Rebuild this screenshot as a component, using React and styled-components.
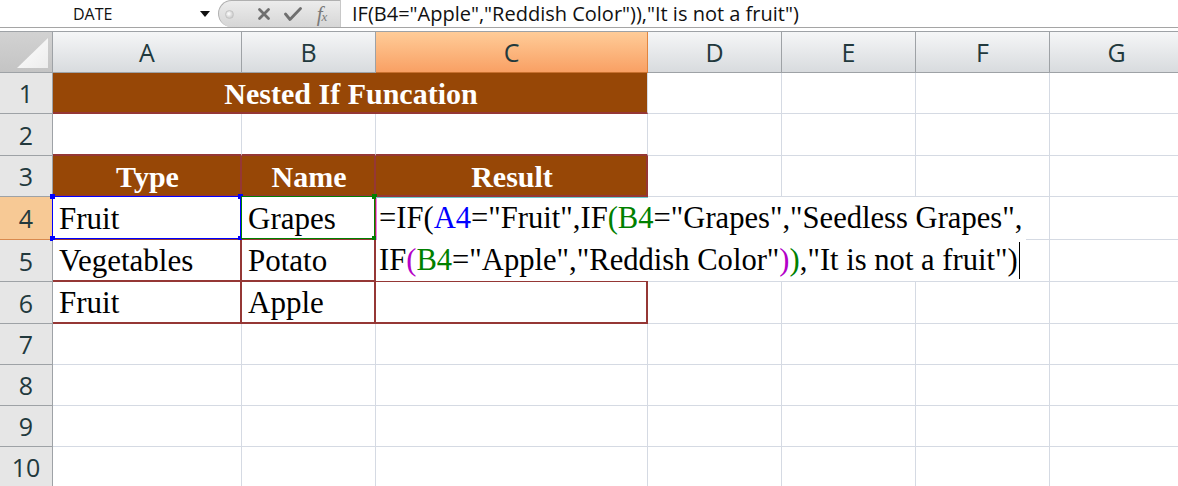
import React from "react";
import styled, { createGlobalStyle } from "styled-components";

const GlobalStyle = createGlobalStyle`
  html, body {
    margin: 0;
    padding: 0;
    background: #ffffff;
  }
  body {
    width: 1178px;
    height: 486px;
    overflow: hidden;
  }
`;

const MAROON = "#953735";
const BROWN = "#974706";
const GRID = "#d5dae3";
const HEAD_LINE = "#9ea2a6";

const columns = ["A", "B", "C", "D", "E", "F", "G"];
const widths = [189, 134, 272, 134, 134, 134, 134];
const heights = [41, 42, 41, 43, 42, 42, 41, 41, 41, 41];

const data = {
  A4: "Fruit",
  B4: "Grapes",
  A5: "Vegetables",
  B5: "Potato",
  A6: "Fruit",
  B6: "Apple",
};

const Page = styled.div`
  width: 1178px;
  height: 486px;
  overflow: hidden;
  background: #ffffff;
`;

/* ---------- formula bar ---------- */

const FormulaBar = styled.div`
  display: flex;
  align-items: stretch;
  height: 27px;
  border-bottom: 1px solid #a5a5a5;
  margin-bottom: 3px;
`;

const NameBox = styled.div`
  width: 198px;
  display: flex;
  align-items: center;
  padding-left: 73px;
  box-sizing: border-box;
  font-family: "Open Sans", "Noto Sans", sans-serif;
  font-size: 16px;
  color: #111;
  position: relative;
`;

const Caret = styled.span`
  position: absolute;
  right: -12px;
  top: 11px;
  width: 0;
  height: 0;
  border-left: 5px solid transparent;
  border-right: 5px solid transparent;
  border-top: 6px solid #111;
`;

const Pill = styled.div`
  margin-left: 20px;
  width: 122px;
  box-sizing: border-box;
  border: 1px solid #b0b0b0;
  border-right: none;
  border-bottom: none;
  border-radius: 14px 0 0 14px;
  background: linear-gradient(#ececec, #d6d6d6);
  display: flex;
  align-items: center;
  padding-left: 6px;
`;

const Knob = styled.span`
  width: 7px;
  height: 7px;
  border-radius: 50%;
  background: radial-gradient(circle at 40% 40%, #ffffff, #b8b8b8);
  border: 1px solid #c4c4c4;
  margin-right: 15px;
`;

const IconSlot = styled.span`
  width: 29px;
  display: flex;
  align-items: center;
  justify-content: center;
`;

const Fx = styled.span`
  font-family: "Liberation Serif", serif;
  font-style: italic;
  font-size: 21px;
  color: #7a7a7a;
  letter-spacing: -1px;
  line-height: 1;

  sub {
    font-size: 13px;
    vertical-align: 0;
  }
`;

const FormulaInput = styled.div`
  flex: 1;
  border-left: 1px solid #c8c8c8;
  display: flex;
  align-items: center;
  padding-left: 11px;
  font-family: "Open Sans", "Noto Sans", sans-serif;
  font-size: 20px;
  color: #111;
  white-space: nowrap;
`;

/* ---------- sheet ---------- */

const Sheet = styled.div`
  display: grid;
  grid-template-columns: 53px ${widths.map((w) => `${w}px`).join(" ")};
  grid-template-rows: 41px ${heights.map((h) => `${h}px`).join(" ")};
  border-top: 1px solid ${HEAD_LINE};
`;

const Corner = styled.div`
  background: linear-gradient(#d2d2d2, #c4c4c4);
  border-right: 1px solid ${HEAD_LINE};
  border-bottom: 1px solid ${HEAD_LINE};
  box-sizing: border-box;
  display: flex;
  align-items: flex-end;
  justify-content: flex-end;
  padding: 0 3px 3px 0;
`;

const ColHead = styled.div`
  box-sizing: border-box;
  display: flex;
  align-items: center;
  justify-content: center;
  font-family: "Open Sans", "Noto Sans", sans-serif;
  font-size: 25px;
  color: #22393d;
  border-right: 1px solid ${(p) => (p.$active ? "#e2853f" : HEAD_LINE)};
  border-bottom: 1px solid ${(p) => (p.$active ? "#c8702e" : HEAD_LINE)};
  background: ${(p) =>
    p.$active
      ? "linear-gradient(#ffcc98, #f9a064)"
      : "linear-gradient(#f5f6f7, #d8dbde)"};
`;

const RowHead = styled.div`
  box-sizing: border-box;
  display: flex;
  align-items: center;
  justify-content: center;
  font-family: "Open Sans", "Noto Sans", sans-serif;
  font-size: 25px;
  color: #22393d;
  border-right: 1px solid ${(p) => (p.$active ? "#d98a4e" : HEAD_LINE)};
  border-bottom: 1px solid ${(p) => (p.$active ? "#d98a4e" : HEAD_LINE)};
  background: ${(p) => (p.$active ? "#f7c995" : "#e6e6e6")};
`;

const Cell = styled.div`
  position: relative;
  box-sizing: border-box;
  display: flex;
  align-items: center;
  justify-content: ${(p) => (p.$center ? "center" : "flex-start")};
  padding: 2px 4px 0 6px;
  grid-column: ${(p) => (p.$span ? `span ${p.$span}` : "auto")};
  background: ${(p) => (p.$fill ? BROWN : "#ffffff")};
  border-right: ${(p) => (p.$edge ? `2px solid ${MAROON}` : `1px solid ${GRID}`)};
  border-bottom: ${(p) => (p.$base ? `2px solid ${MAROON}` : `1px solid ${GRID}`)};
  font-family: "Liberation Serif", "Times New Roman", serif;
  font-size: ${(p) => (p.$fill ? "30px" : "31px")};
  font-weight: ${(p) => (p.$fill ? 700 : 400)};
  color: ${(p) => (p.$fill ? "#ffffff" : "#000000")};
  white-space: nowrap;
`;

const RangeMark = styled.span`
  position: absolute;
  left: -1px;
  top: -1px;
  right: -1px;
  bottom: -1px;
  border: 1px solid ${(p) => p.$color};
  pointer-events: none;
`;

const Handle = styled.span`
  position: absolute;
  width: 5px;
  height: 5px;
  background: ${(p) => p.$color};
  left: ${(p) => (p.$left ? "-3px" : "auto")};
  right: ${(p) => (p.$left ? "auto" : "-3px")};
  top: ${(p) => (p.$top ? "-3px" : "auto")};
  bottom: ${(p) => (p.$top ? "auto" : "-3px")};
`;

const Editor = styled.div`
  position: absolute;
  left: 0;
  top: 0;
  width: 650px;
  height: 84px;
  z-index: 2;
  background: #ffffff;
  box-sizing: border-box;
  padding: 0 0 0 3px;
  font-family: "Liberation Serif", "Times New Roman", serif;
  font-size: 30.6px;
  line-height: 42px;
  color: #000;
  white-space: nowrap;
`;

const ActiveEdge = styled.span`
  position: absolute;
  left: 0;
  top: 0;
  width: 272px;
  height: 43px;
  border-top: 1px solid #6ccaca;
  border-left: 1px solid #f07af0;
  box-sizing: border-box;
  pointer-events: none;
`;

const Ref = styled.span`
  color: ${(p) => p.$c};
`;

const TextCursor = styled.span`
  display: inline-block;
  width: 1px;
  height: 37px;
  background: #000;
  vertical-align: -9px;
  margin-left: 1px;
`;

const BLUE = "#0000ff";
const GREEN = "#008000";
const PURPLE = "#b400c8";

function Cross() {
  return (
    <svg width="14" height="14" viewBox="0 0 14 14">
      <path d="M2.5 2.5 L11.5 11.5 M11.5 2.5 L2.5 11.5" stroke="#6f6f6f" strokeWidth="2.8" strokeLinecap="round" />
    </svg>
  );
}

function Check() {
  return (
    <svg width="18" height="15" viewBox="0 0 18 15">
      <path d="M1.5 7 L6 12.5 L16.5 1.5" fill="none" stroke="#6f6f6f" strokeWidth="2.8" strokeLinejoin="round" strokeLinecap="round" />
    </svg>
  );
}

function CornerMark() {
  return (
    <svg width="32" height="31" viewBox="0 0 32 31">
      <defs>
        <linearGradient id="cornerFill" x1="0" y1="0" x2="1" y2="1">
          <stop offset="0" stopColor="#ffffff" />
          <stop offset="1" stopColor="#ececec" />
        </linearGradient>
      </defs>
      <polygon points="31,0 31,30 0,30" fill="url(#cornerFill)" />
    </svg>
  );
}

function cellProps(col, row) {
  const inTable = col === "A" || col === "B" || col === "C";
  if (!inTable) return {};
  if (row === 2) return { $base: true };
  if (row === 3) return { $fill: true, $center: true, $edge: true, $base: true };
  if (row >= 4 && row <= 6) return { $edge: true, $base: true };
  return {};
}

function Marks({ color, handles }) {
  return (
    <>
      <RangeMark $color={color} />
      {handles.map(([left, top]) => (
        <Handle key={`${left}${top}`} $color={color} $left={left} $top={top} />
      ))}
    </>
  );
}

function FormulaEditor() {
  return (
    <Editor>
      <ActiveEdge />
      =IF(<Ref $c={BLUE}>A4</Ref>="Fruit",IF<Ref $c={GREEN}>(B4</Ref>="Grapes","Seedless Grapes",
      <br />
      IF<Ref $c={PURPLE}>(</Ref><Ref $c={GREEN}>B4</Ref>="Apple","Reddish Color"<Ref $c={PURPLE}>)</Ref>
      <Ref $c={GREEN}>)</Ref>,"It is not a fruit")
      <TextCursor />
    </Editor>
  );
}

function renderRow(row) {
  const out = [
    <RowHead key={`h${row}`} $active={row === 4}>
      {row}
    </RowHead>,
  ];
  columns.forEach((col) => {
    const id = `${col}${row}`;
    if (row === 1 && (col === "B" || col === "C")) return;
    if (row === 1 && col === "A") {
      out.push(
        <Cell key={id} $span={3} $fill $center $base>
          Nested If Funcation
        </Cell>
      );
      return;
    }
    const header = row === 3 ? { A: "Type", B: "Name", C: "Result" }[col] : null;
    out.push(
      <Cell key={id} {...cellProps(col, row)}>
        {header || data[id]}
        {id === "A4" && <Marks color={BLUE} handles={[[true, true], [true, false], [false, true], [false, false]]} />}
        {id === "B4" && <Marks color={GREEN} handles={[[false, true], [false, false]]} />}
        {id === "C4" && <FormulaEditor />}
      </Cell>
    );
  });
  return out;
}

export default function App() {
  return (
    <Page>
      <GlobalStyle />
      <FormulaBar>
        <NameBox>
          DATE
          <Caret />
        </NameBox>
        <Pill>
          <Knob />
          <IconSlot>
            <Cross />
          </IconSlot>
          <IconSlot>
            <Check />
          </IconSlot>
          <IconSlot>
            <Fx>
              f<sub>x</sub>
            </Fx>
          </IconSlot>
        </Pill>
        <FormulaInput>IF(B4="Apple","Reddish Color")),"It is not a fruit")</FormulaInput>
      </FormulaBar>
      <Sheet>
        <Corner>
          <CornerMark />
        </Corner>
        {columns.map((c) => (
          <ColHead key={c} $active={c === "C"}>
            {c}
          </ColHead>
        ))}
        {heights.map((_, i) => renderRow(i + 1))}
      </Sheet>
    </Page>
  );
}
